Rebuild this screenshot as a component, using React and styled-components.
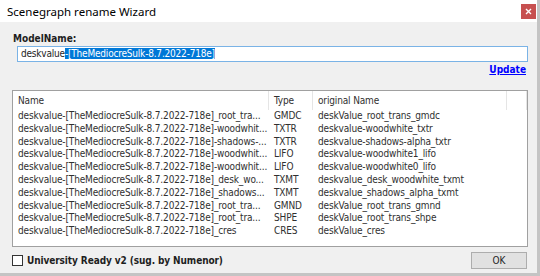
import React from 'react';
import styled, { createGlobalStyle } from 'styled-components';

const GlobalStyle = createGlobalStyle`
  html, body {
    margin: 0;
    padding: 0;
    background: #c4c4c4;
  }
  body {
    font-family: "DejaVu Sans Condensed", "DejaVu Sans", sans-serif;
    font-size: 10px;
    letter-spacing: -0.15px;
    color: #1e1e1e;
  }
`;

const rows = [
  ['deskvalue-[TheMediocreSulk-8.7.2022-718e]_root_tra...', 'GMDC', 'deskValue_root_trans_gmdc'],
  ['deskvalue-[TheMediocreSulk-8.7.2022-718e]-woodwhit...', 'TXTR', 'deskvalue-woodwhite_txtr'],
  ['deskvalue-[TheMediocreSulk-8.7.2022-718e]-shadows-...', 'TXTR', 'deskvalue-shadows-alpha_txtr'],
  ['deskvalue-[TheMediocreSulk-8.7.2022-718e]-woodwhit...', 'LIFO', 'deskvalue-woodwhite1_lifo'],
  ['deskvalue-[TheMediocreSulk-8.7.2022-718e]-woodwhit...', 'LIFO', 'deskvalue-woodwhite0_lifo'],
  ['deskvalue-[TheMediocreSulk-8.7.2022-718e]_desk_wo...', 'TXMT', 'deskvalue_desk_woodwhite_txmt'],
  ['deskvalue-[TheMediocreSulk-8.7.2022-718e]_shadows...', 'TXMT', 'deskvalue_shadows_alpha_txmt'],
  ['deskvalue-[TheMediocreSulk-8.7.2022-718e]_root_tra...', 'GMND', 'deskValue_root_trans_gmnd'],
  ['deskvalue-[TheMediocreSulk-8.7.2022-718e]_root_tra...', 'SHPE', 'deskValue_root_trans_shpe'],
  ['deskvalue-[TheMediocreSulk-8.7.2022-718e]_cres', 'CRES', 'deskValue_cres'],
];

const App = () => {
  return (
    <>
      <GlobalStyle />
      <Window>
        <TitleBar>
          <Title>Scenegraph rename Wizard</Title>
          <CloseButton>
            <svg width="7" height="7" viewBox="0 0 7 7">
              <path d="M1 1 L6 6 M6 1 L1 6" stroke="#fff" strokeWidth="1.4" />
            </svg>
          </CloseButton>
        </TitleBar>
        <Body>
          <FieldLabel>ModelName:</FieldLabel>
          <NameInput>
            deskvalue<Selected>-[TheMediocreSulk-8.7.2022-718e]</Selected>
          </NameInput>
          <UpdateRow>
            <UpdateLink>Update</UpdateLink>
          </UpdateRow>
          <ListBox>
            <HeaderRow>
              <HeaderCell>Name</HeaderCell>
              <HeaderCell>Type</HeaderCell>
              <HeaderCell>original Name</HeaderCell>
              <HeaderCell />
            </HeaderRow>
            {rows.map((r, i) => (
              <Row key={`row${i}`}>
                <Cell>{r[0]}</Cell>
                <Cell>{r[1]}</Cell>
                <Cell>{r[2]}</Cell>
              </Row>
            ))}
          </ListBox>
          <Footer>
            <CheckLabel>
              <CheckBox />
              University Ready v2 (sug. by Numenor)
            </CheckLabel>
            <OkButton>OK</OkButton>
          </Footer>
        </Body>
      </Window>
    </>
  );
};

export default App;

const Window = styled.div`
  width: 537px;
  height: 273px;
  background: #f0f0f0;
  display: flex;
  flex-direction: column;
  overflow: hidden;
`;

const TitleBar = styled.div`
  height: 22px;
  background: #ffffff;
  display: flex;
  align-items: center;
  justify-content: space-between;
  padding-left: 7px;
  flex-shrink: 0;
`;

const Title = styled.span`
  font-family: "Noto Sans", "Open Sans", sans-serif;
  font-size: 11.5px;
  letter-spacing: 0;
  color: #000;
`;

const CloseButton = styled.div`
  width: 15px;
  height: 15px;
  margin-right: 1px;
  margin-top: 1px;
  background: #c75050;
  display: flex;
  align-items: center;
  justify-content: center;
`;

const Body = styled.div`
  padding: 11px 9px 0 12px;
  display: flex;
  flex-direction: column;
`;

const FieldLabel = styled.div`
  font-weight: bold;
  line-height: 12px;
  padding-left: 1px;
  letter-spacing: 0;
`;

const NameInput = styled.div`
  margin: 1px 0 0 5px;
  height: 16px;
  box-sizing: border-box;
  border: 1px solid #7ab3e6;
  background: #fff;
  padding-left: 3px;
  line-height: 14px;
  white-space: nowrap;
  letter-spacing: -0.2px;
`;

const Selected = styled.span`
  background: #0078d7;
  color: #fff;
`;

const UpdateRow = styled.div`
  display: flex;
  justify-content: flex-end;
  padding-right: 2px;
  margin-top: 2px;
`;

const UpdateLink = styled.a`
  font-weight: bold;
  color: #0000ff;
  text-decoration: underline;
  line-height: 12px;
  letter-spacing: 0;
`;

const ListBox = styled.div`
  margin-top: 14px;
  width: 516px;
  height: 157px;
  box-sizing: border-box;
  border: 1px solid #a0a0a0;
  background: #fff;
  overflow: hidden;
`;

const columns = '256px 44px 194px 1fr';

const HeaderRow = styled.div`
  display: grid;
  grid-template-columns: ${columns};
  height: 19px;
  align-items: stretch;
`;

const HeaderCell = styled.div`
  display: flex;
  align-items: center;
  padding-left: 5px;
  border-right: 1px solid #e5e5e5;
  color: #303030;
`;

const Row = styled.div`
  display: grid;
  grid-template-columns: ${columns};
  height: 12.8px;
  line-height: 12.8px;
`;

const Cell = styled.div`
  padding-left: 5px;
  white-space: nowrap;
  overflow: hidden;
  color: #303030;
`;

const Footer = styled.div`
  display: flex;
  justify-content: space-between;
  align-items: center;
  margin-top: 5px;
`;

const CheckLabel = styled.label`
  display: flex;
  align-items: center;
  gap: 4px;
  font-weight: bold;
  letter-spacing: -0.1px;
  color: #1e1e1e;
`;

const CheckBox = styled.span`
  width: 11px;
  height: 11px;
  box-sizing: border-box;
  border: 1px solid #333;
  background: #fff;
`;

const OkButton = styled.button`
  width: 56px;
  height: 17px;
  margin-right: 1px;
  padding: 0;
  border: 1px solid #adadad;
  background: #e1e1e1;
  font-family: "DejaVu Sans Condensed", "DejaVu Sans", sans-serif;
  font-size: 10px;
  color: #1e1e1e;
`;
